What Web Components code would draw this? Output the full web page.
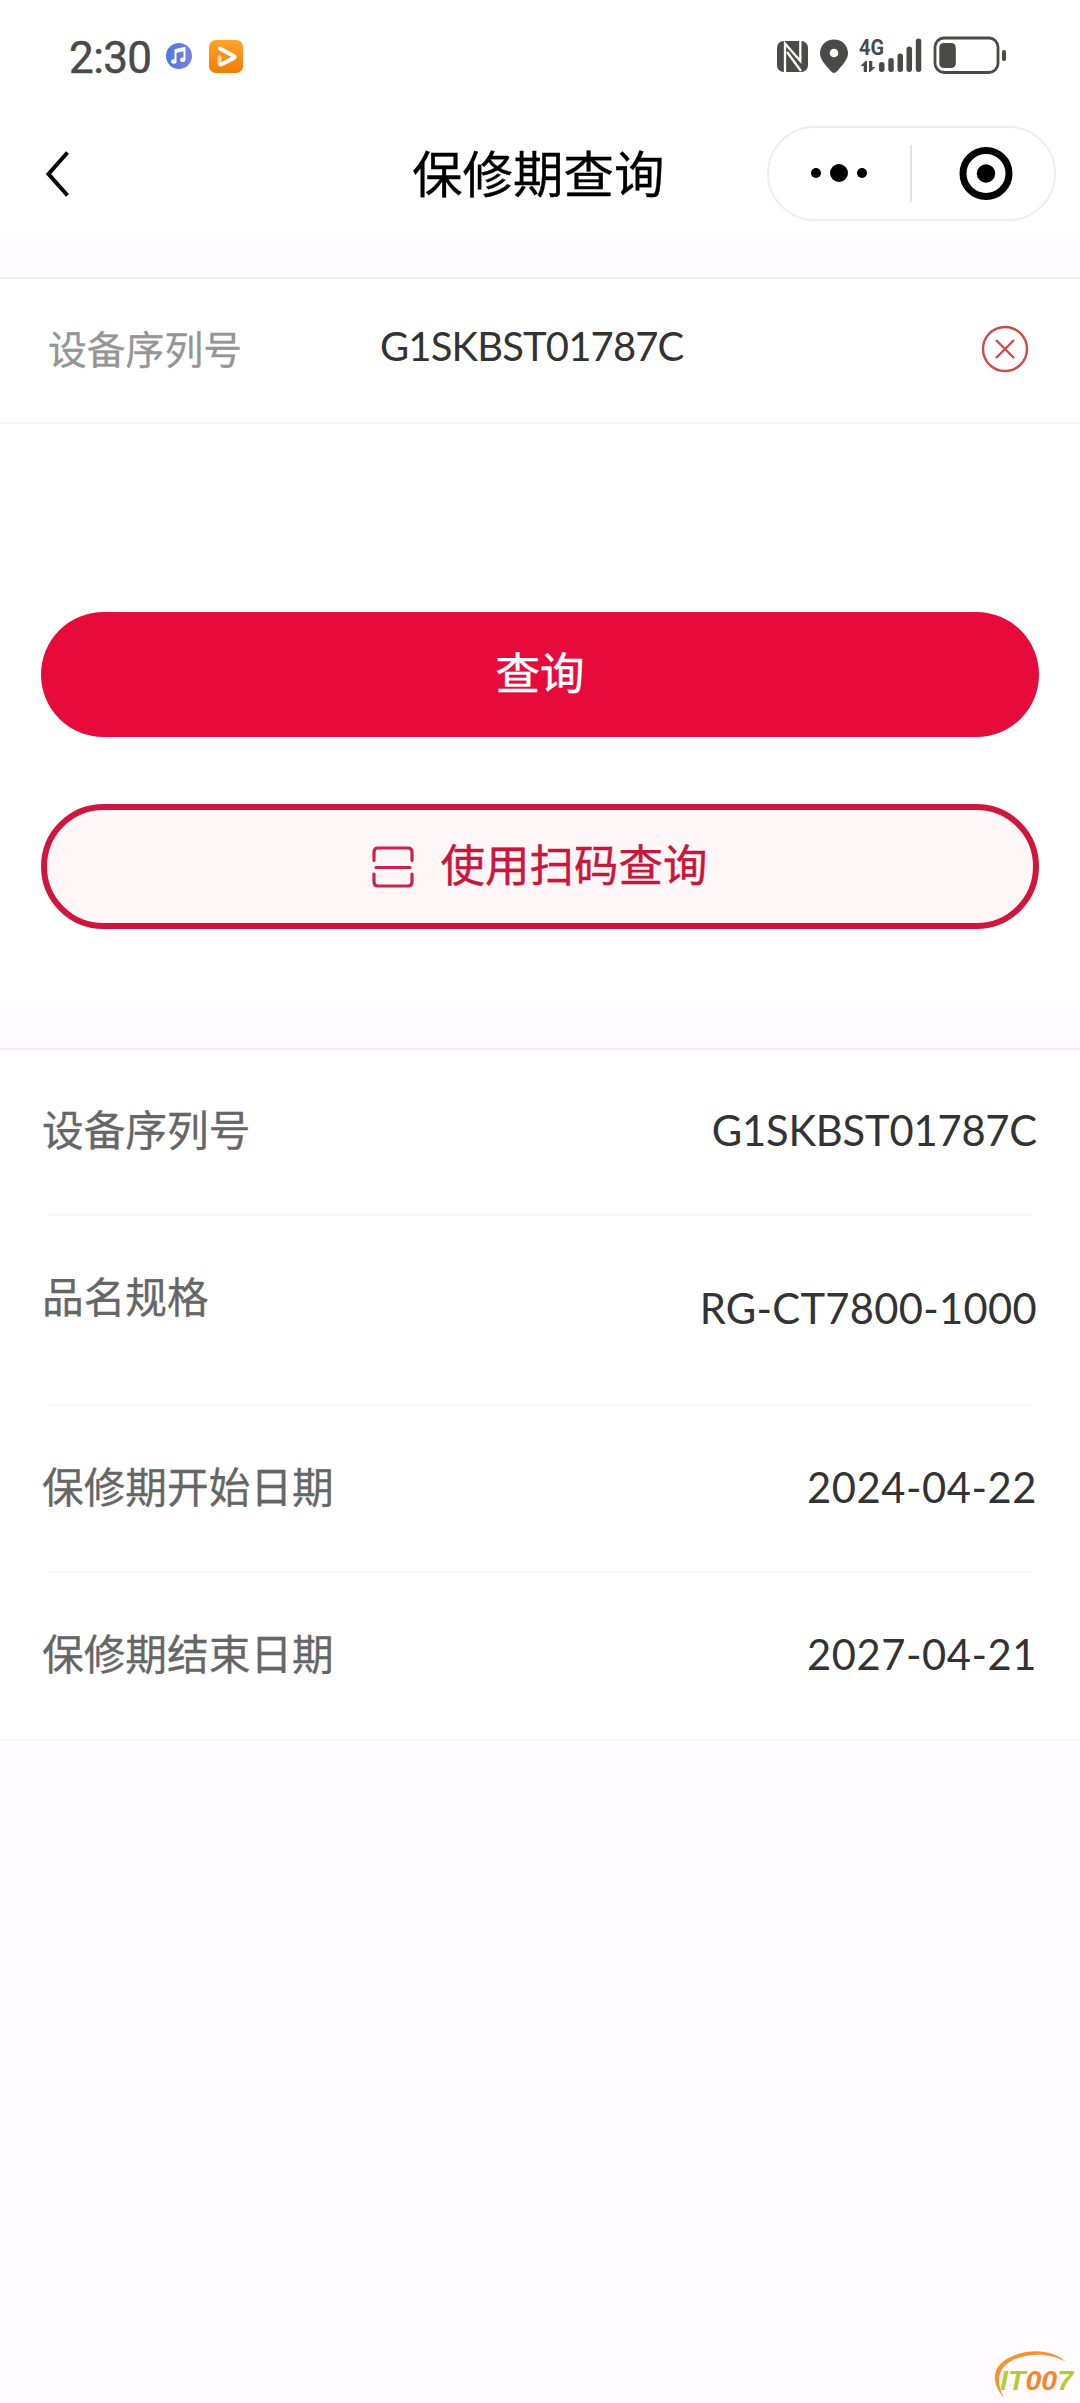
<!DOCTYPE html>
<html lang="zh-CN">
<head>
<meta charset="utf-8">
<title>保修期查询</title>
<style>
html,body{margin:0;padding:0}
body{background:#fffbff;font-family:"Noto Sans CJK SC",sans-serif;width:1080px;min-height:2403px}
</style>
</head>
<body>
<warranty-page></warranty-page>
<script>
const define = (name, html) => customElements.define(name, class extends HTMLElement {
  constructor() {
    super();
    const t = document.createElement('template');
    t.innerHTML = html;
    this.attachShadow({mode: 'open'}).appendChild(t.content.cloneNode(true));
  }
});

define('status-bar', `
<style>
:host{display:flex;height:110px;box-sizing:border-box;padding:36px 74px 32px 69px;justify-content:space-between;align-items:center;background:#fff}
.left{display:flex;align-items:center}
.time{font:400 44px/42px Roboto,sans-serif;color:#4a4a4a;letter-spacing:-.6px;width:97px;padding-top:1px;-webkit-text-stroke:.5px #4a4a4a}
.video{margin-left:17px}
svg{display:block}
.right{display:flex}
.net text{font:700 22px Roboto,sans-serif;fill:#4a4b49}
</style>
<div class="left">
  <span class="time">2:30</span>
  <svg width="26" height="42" viewBox="0 0 26 42">
    <defs><linearGradient id="m" x1="0" y1="0" x2="1" y2="0"><stop offset="0" stop-color="#4c78dc"/><stop offset="1" stop-color="#7f7fe2"/></linearGradient></defs>
    <circle cx="13" cy="20" r="13" fill="url(#m)"/>
    <path d="M9.500 25V14l9-2v11.500M9.500 16l9-2" fill="none" stroke="#fff" stroke-width="2"/>
    <ellipse cx="7.800" cy="25.500" rx="2.700" ry="2.200" fill="#fff"/><ellipse cx="16.800" cy="23.700" rx="2.700" ry="2.200" fill="#fff"/>
  </svg>
  <svg class="video" width="34" height="42" viewBox="0 0 34 42">
    <defs><linearGradient id="v" x1="0" y1="0" x2="0" y2="1"><stop offset="0" stop-color="#ffa32c"/><stop offset="1" stop-color="#f27c05"/></linearGradient></defs>
    <rect y="4" width="34" height="33" rx="7" fill="url(#v)"/>
    <path d="M10.500 21v7" stroke="#ffd7a4" stroke-width="4" stroke-linecap="round"/>
    <path d="M11 12.500l14 7.800c1 .6 1 1 0 1.600L12 28.500" fill="none" stroke="#fff" stroke-width="4" stroke-linecap="round" stroke-linejoin="round"/>
  </svg>
</div>
<div class="right">
<svg class="net" width="230" height="42" viewBox="776 36 230 42">
  <g fill="#4a4b49">
    <rect x="777" y="41" width="31" height="31" rx="6.500"/>
    <path d="M785 73V43.500L800.300 61V40M787 52l14 19" fill="none" stroke="#fff" stroke-width="2.300"/>
    <path fill-rule="evenodd" d="M834 39.500c-8.200 0-14 6.200-14 13.800 0 6.500 6 12.200 10.700 17.700 2.300 2.600 4.300 2.600 6.600 0C842 65.500 848 59.800 848 53.300c0-7.600-5.800-13.800-14-13.800zm0 9.200a4.300 4.300 0 1 1 0 8.600 4.300 4.300 0 0 1 0-8.600z"/>
    <path d="M860.500 66l5-5h1.500v11h-3.300v-6zM869 61h3.300v6h3l-5 5H869z"/>
    <rect x="879" y="62" width="5.500" height="10" rx="2.700"/>
    <rect x="888.300" y="58" width="5.500" height="14" rx="2.700"/>
    <rect x="897.500" y="53.500" width="5.500" height="18.500" rx="2.700"/>
    <rect x="906.500" y="46.500" width="5.500" height="25.500" rx="2.700"/>
    <rect x="915.800" y="38.500" width="5.500" height="33.500" rx="2.700"/>
    <rect x="939.300" y="43" width="16.500" height="25" rx="4.500"/>
    <rect x="1002" y="50" width="4" height="11" rx="1.800"/>
  </g>
  <rect x="935" y="38" width="63" height="34.500" rx="9" fill="none" stroke="#4a4b49" stroke-width="2.800"/>
  <text x="859" y="55" textLength="25" lengthAdjust="spacingAndGlyphs">4G</text>
</svg>
</div>`);

define('nav-bar', `
<style>
:host{display:flex;justify-content:space-between;align-items:center;height:128px;background:#fff;padding:0 24px 0 44px}
.back{width:368px}
h1{flex:1;margin:-6px 0 0;font:400 50.500px/60px "Noto Sans CJK SC",sans-serif;color:#000;-webkit-text-stroke:.3px #000}
.capsule{box-sizing:border-box;width:289px;height:95px;border:2px solid #ededed;border-radius:48px;display:flex;align-items:center;margin-top:-2px}
.dots,.target{box-sizing:border-box;display:flex;align-items:center}
.dots{width:141px;padding-left:40px}
.target{flex:1;padding-left:47px}
.bar{width:2px;height:57px;background:#e2e2e2}
svg{display:block}
</style>
<div class="back"><svg width="30" height="48" viewBox="0 0 30 48"><path d="M23.500 2.500L4.500 24l19 21.500" fill="none" stroke="#000" stroke-width="4"/></svg></div>
<h1><slot></slot></h1>
<div class="capsule">
  <div class="dots"><svg width="60" height="20" viewBox="0 0 60 20"><circle cx="7" cy="10" r="5"/><circle cx="30" cy="10" r="9"/><circle cx="53" cy="10" r="5"/></svg></div>
  <i class="bar"></i>
  <div class="target"><svg width="54" height="54" viewBox="0 0 54 54"><circle cx="27" cy="27.500" r="23" fill="none" stroke="#000" stroke-width="7"/><circle cx="27" cy="27.500" r="9.200"/></svg></div>
</div>`);

define('serial-field', `
<style>
:host{display:flex;align-items:center;box-sizing:border-box;height:147px;border-top:2px solid #f2f0f2;border-bottom:2px solid #f6f6f6;padding:0 51px 0 48px}
label{width:332px;font:400 38.800px/50px "Noto Sans CJK SC",sans-serif;color:#959595;margin-top:-7px;-webkit-text-stroke:.3px #959595}
output{flex:1;font:400 40px/50px Lato,sans-serif;color:#333;margin-top:-9px;letter-spacing:var(--track,0px)}
svg{display:block;margin-top:-4px}
</style>
<label><slot name="label"></slot></label>
<output><slot></slot></output>
<svg width="48" height="48" viewBox="0 0 48 48" fill="none" stroke="#d1494c" stroke-width="2.400"><circle cx="24" cy="24" r="22"/><path d="M15 15l18 18M33 15L15 33"/></svg>`);

define('pill-button', `
<style>
:host{display:flex;align-items:center;justify-content:center;box-sizing:border-box;height:125px;border-radius:63px;background:#e60b3a;color:#fff;font:400 44.500px/60px "Noto Sans CJK SC",sans-serif;-webkit-text-stroke:.4px currentColor}
:host([outline]){background:#fff6f7;border:6px solid #cf163e;color:#c8173e}
span{margin-top:-8px}
::slotted(scan-icon){margin-right:26px}
</style>
<slot name="icon"></slot><span><slot></slot></span>`);

define('scan-icon', `
<style>:host{display:block}svg{display:block}</style>
<svg width="42" height="42" viewBox="0 0 42 42" fill="none" stroke="#c8234a" stroke-width="3.200" stroke-linecap="round"><path d="M2 14.500V6q0-4 4-4h30q4 0 4 4v8.500M4 21.500h34M2 28V36q0 4 4 4h30q4 0 4-4v-8"/></svg>`);

define('info-row', `
<style>
:host{display:block;height:var(--h,167px);box-sizing:border-box;padding:0 43px 0 42px;background:#fff}
.line{display:flex;justify-content:space-between;align-items:flex-start;height:calc(var(--h,167px) - 2px)}
dt,dd{margin:0}
dt{font:400 41.700px/60px "Noto Sans CJK SC",sans-serif;color:#666;padding-top:var(--lt,49px);-webkit-text-stroke:.3px #666}
dd{font:400 41.700px/60px Lato,sans-serif;color:#333;padding-top:var(--vt,51px);letter-spacing:var(--track,0px)}
.rule{height:2px;margin:0 5px 0 6px;background:#f7f7f7}
:host([last]) .rule{background:#faf6f9;margin:0 -43px 0 -42px}
</style>
<div class="line"><dt><slot name="label"></slot></dt><dd><slot></slot></dd></div><div class="rule"></div>`);

define('site-mark', `
<style>:host{display:block;width:84px;height:46px}svg{display:block}text{font:italic 700 27.500px "Liberation Sans",sans-serif}</style>
<svg width="84" height="46" viewBox="992 2347 84 46" overflow="visible">
  <path d="M1005 2398C987 2377 996 2358 1027 2352C1042 2349.500 1058 2353 1067 2362C1056 2356 1042 2353.500 1029 2355.500C1003 2360 993 2375 1005 2398Z" fill="#f7932f"/>
  <text x="1001" y="2390" textLength="73" lengthAdjust="spacingAndGlyphs"><tspan fill="#b5cc35">IT</tspan><tspan fill="#f7862c">00</tspan><tspan fill="#b5cc35">7</tspan></text>
</svg>`);

define('warranty-page', `
<style>
:host{display:flex;flex-direction:column;width:1080px;height:2403px;background:#fffbff}
.query{margin-top:39px;background:#fff;height:729px}
.actions{display:flex;flex-direction:column;gap:67px;padding:188px 41px 0}
.result{margin:42px 0 0;border-top:2px solid #f0edf2;background:#fff}
.foot{margin-top:auto;display:flex;justify-content:flex-end;padding:0 5px 10px 0}
</style>
<status-bar></status-bar>
<nav-bar>保修期查询</nav-bar>
<section class="query">
  <serial-field style="--track:-.85px"><span slot="label">设备序列号</span>G1SKBST01787C</serial-field>
  <div class="actions">
    <pill-button>查询</pill-button>
    <pill-button outline><scan-icon slot="icon"></scan-icon>使用扫码查询</pill-button>
  </div>
</section>
<dl class="result">
  <info-row style="--h:166px;--lt:48px;--vt:50px;--track:-.2px"><span slot="label">设备序列号</span>G1SKBST01787C</info-row>
  <info-row style="--h:190px;--vt:62px;--track:.3px"><span slot="label">品名规格</span>RG-CT7800-1000</info-row>
  <info-row style="--track:.55px"><span slot="label">保修期开始日期</span>2024-04-22</info-row>
  <info-row last style="--h:168px;--track:.55px"><span slot="label">保修期结束日期</span>2027-04-21</info-row>
</dl>
<div class="foot"><site-mark></site-mark></div>`);
</script>
</body>
</html>
